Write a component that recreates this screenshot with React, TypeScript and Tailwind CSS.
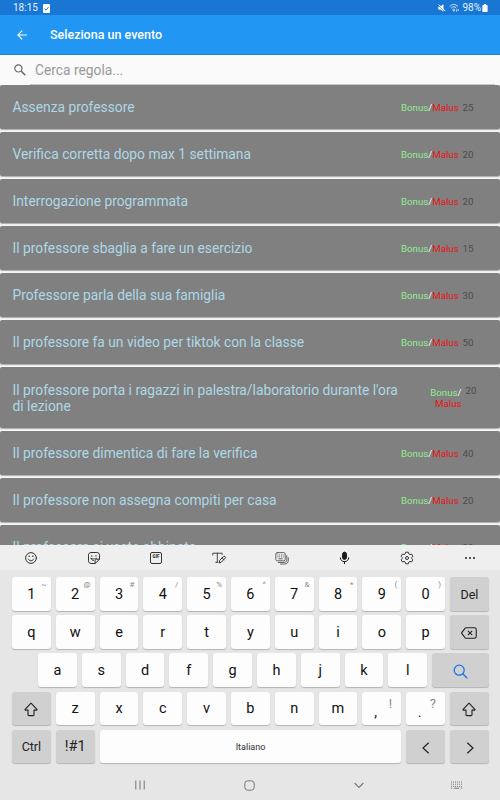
import type { ReactNode } from "react";

type Rule = { name: string; points: number; tall?: boolean };

const rules: Rule[] = [
  { name: "Assenza professore", points: 25 },
  { name: "Verifica corretta dopo max 1 settimana", points: 20 },
  { name: "Interrogazione programmata", points: 20 },
  { name: "Il professore sbaglia a fare un esercizio", points: 15 },
  { name: "Professore parla della sua famiglia", points: 30 },
  { name: "Il professore fa un video per tiktok con la classe", points: 50 },
  {
    name: "Il professore porta i ragazzi in palestra/laboratorio durante l'ora di lezione",
    points: 20,
    tall: true,
  },
  { name: "Il professore dimentica di fare la verifica", points: 40 },
  { name: "Il professore non assegna compiti per casa", points: 20 },
  { name: "Il professore si veste abbinato", points: 20 },
];

const numberKeys = [
  ["1", "~"],
  ["2", "@"],
  ["3", "#"],
  ["4", "/"],
  ["5", "%"],
  ["6", "^"],
  ["7", "&"],
  ["8", "*"],
  ["9", "("],
  ["0", ")"],
];

function RuleRow({ rule }: { rule: Rule }) {
  if (rule.tall) {
    return (
      <li className="flex h-[61px] shrink-0 items-center rounded-[2px] bg-[#808080] pl-[12.5px] shadow-[0_1px_1px_rgba(0,0,0,0.3)]">
        <span className="w-[392px] text-[13.8px] leading-4 text-[#add8e6]">{rule.name}</span>
        <div className="ml-[22px] flex h-8 gap-1 pt-[5px]">
          <span className="w-[35px] text-right text-[9.7px] leading-[11px] text-[#90ee90]">
            Bonus<span className="text-white">/</span>
            <br />
            <span className="text-[#e81414]">Malus</span>
          </span>
          <span className="-mt-[2px] text-[9.8px] leading-[11px] text-[#4c4c4c]">{rule.points}</span>
        </div>
      </li>
    );
  }
  return (
    <li className="flex h-11 shrink-0 items-center rounded-[2px] bg-[#808080] pl-[12.5px] shadow-[0_1px_1px_rgba(0,0,0,0.3)]">
      <span className="flex-1 text-[13.8px] leading-4 text-[#add8e6]">{rule.name}</span>
      <span className="w-[58px] text-[9.7px] leading-[11px] whitespace-nowrap text-[#90ee90]">
        Bonus<span className="text-white">/</span>
        <span className="text-[#e81414]">Malus</span>
      </span>
      <span className="mr-[26.5px] ml-[3.5px] pt-px text-[9.8px] leading-[11px] text-[#4c4c4c]">{rule.points}</span>
    </li>
  );
}

function Key({ children, hint, big, dark, className = "w-[38.8px]" }: {
  children: ReactNode;
  hint?: string;
  big?: boolean;
  dark?: boolean;
  className?: string;
}) {
  return (
    <button
      className={`relative flex h-[33.5px] items-center justify-center rounded-[3px] pt-[2px] text-[14.5px] leading-none shadow-[0_1px_1px_rgba(0,0,0,0.22)] ${
        dark ? "bg-[#d0d0d0] text-[#222]" : "bg-[#fdfdfd] text-[#111]"
      } ${className}`}
    >
      {children}
      {hint && (
        <span className={`absolute text-[#8a8a8a] ${big ? "top-[5px] right-[9px] text-[13px]" : "top-[4px] right-[4px] text-[8px]"}`}>
          {hint}
        </span>
      )}
    </button>
  );
}

function ShiftIcon() {
  return (
    <svg width="14" height="15" viewBox="0 0 14 15" fill="none" stroke="#222" strokeWidth="1.1" strokeLinejoin="round">
      <path d="M7 1.2 12.9 7.3c.3.4.1.8-.4.8H10v4.7c0 .5-.3.8-.8.8H4.8c-.5 0-.8-.3-.8-.8V8.1H1.5c-.5 0-.7-.4-.4-.8Z" />
    </svg>
  );
}

function KeyboardTools() {
  return (
    <div className="grid h-[25px] w-[501px] shrink-0 grid-cols-8 place-items-center bg-[#efefef] text-[#333]">
      <svg width="14" height="14" viewBox="0 0 14 14" fill="none" stroke="currentColor" strokeLinecap="round">
        <circle cx="7" cy="7" r="5.4" />
        <path d="M4.4 8.2c.8 2.2 4.4 2.2 5.200 0" />
        <path d="M5.2 5.2v.2M8.8 5.2v.2" strokeWidth="1.4" />
      </svg>
      <svg width="14" height="14" viewBox="0 0 14 14" fill="none" stroke="currentColor" strokeLinecap="round" strokeLinejoin="round">
        <path d="M4.2 1.5h5.6c1.7 0 2.7 1 2.7 2.7v4L8.2 12.5h-4c-1.7 0-2.7-1-2.7-2.7V4.2c0-1.7 1-2.7 2.7-2.7Z" />
        <path d="M8.1 12.3V10c0-1.2.6-1.8 1.8-1.8h2.4" />
        <path d="M4 7.4c.4 1.400 1.300 2.100 2.500 2.100M4 7.400c1.800.8 3.600.8 5.500 0" strokeWidth=".9" />
        <path d="M4.8 4.8v.2M9 4.8v.2" strokeWidth="1.3" />
      </svg>
      <div className="mr-px flex h-3 w-3 items-center justify-center rounded-[2px] border border-[#333] text-[4.5px] leading-none font-black">
        GIF
      </div>
      <svg width="16" height="14" viewBox="0 0 16 14" fill="none" stroke="currentColor" strokeLinecap="round" strokeLinejoin="round">
        <path d="M1.8 4V2.2h9.4V3.4M6.3 2.2v8.9M4.8 11.3H7" strokeWidth=".9" />
        <path d="m8.4 11.6.3-2.2 3.5-3.7c1.2-1.2 2.9.3 1.8 1.6l-3.4 3.6ZM11.1 7l1.8 1.7" />
      </svg>
      <svg width="15" height="14" viewBox="0 0 15 14" fill="none" stroke="#555" strokeWidth=".9" strokeLinecap="round">
        <rect x="1.8" y="1.6" width="9.4" height="8.2" rx="1.5" />
        <path d="M3.7 4h.2M5.5 4h.2M7.4 4h.2M9.2 4h.2M3.7 5.9h.2M5.5 5.9h.2M7.4 5.9h.2M9.2 5.9h.2M4.8 7.8h3.5" />
        <path d="M4.3 11.4H10c2 0 2.8-.9 2.8-2.7V4.6M6.5 13h4c2.6 0 3.8-1.3 3.8-3.8V6.7" />
      </svg>
      <svg width="11" height="14" viewBox="0 0 11 14" fill="none" stroke="#1c1c1c" strokeLinecap="round">
        <rect x="3.5" y="1.2" width="4" height="7.2" rx="2" fill="#1c1c1c" />
        <path d="M1.3 6.8c0 2.2 1.7 3.8 4.2 3.8s4.2-1.6 4.2-3.8M5.5 10.7v2" />
      </svg>
      <svg width="14" height="14" viewBox="0 0 14 14" fill="none" stroke="currentColor" strokeLinejoin="round">
        <path d="M5.7 1.2h2.6l.5 1.7 1.1.6 1.7-.4 1.3 2.2L11.7 6.5v1l1.2 1.2-1.3 2.2-1.7-.4-1.1.6-.5 1.7H5.7l-.5-1.7-1.1-.6-1.7.4-1.3-2.2 1.2-1.2v-1L1.1 5.3l1.3-2.2 1.7.4 1.1-.6Z" />
        <circle cx="7" cy="7" r="1.5" />
      </svg>
      <svg width="12" height="4" viewBox="0 0 12 4" fill="#222">
        <circle cx="2" cy="2" r="1" />
        <circle cx="6" cy="2" r="1" />
        <circle cx="10" cy="2" r="1" />
      </svg>
    </div>
  );
}

export default function App() {
  return (
    <div className="flex h-[800px] w-[500px] flex-col overflow-hidden bg-[#fafafa] font-['Roboto',sans-serif]">
      {/* status bar */}
      <div className="flex h-[15px] shrink-0 items-center bg-[#1976d2] pt-px pr-3 pl-[13px] leading-none text-[#e4f2ff]">
        <span className="text-[10px]">18:15</span>
        <svg className="ml-[5px]" width="7" height="9" viewBox="0 0 7 9">
          <rect width="7" height="9" rx="1" fill="#fff" />
          <path d="m1.6 4.6 1.4 1.5 2.5-3" fill="none" stroke="#1976d2" strokeWidth="1" />
        </svg>
        <svg className="ml-auto" width="8" height="8" viewBox="0 0 8 8">
          <path d="M.3 2.500h2L5.500.3v7.400L2.300 5.500h-2Z" fill="#fff" />
          <path d="m.3 1.500 6 6" stroke="#1976d2" strokeWidth=".7" />
          <path d="m.8.600 6.600 6.600" stroke="#fff" strokeWidth="1" />
        </svg>
        <svg className="mr-[3px] ml-[3px]" width="10" height="8" viewBox="0 0 10 8" fill="none" stroke="#cfe6fb" strokeWidth="1">
          <path d="M.6 2.600C3-.2 6.600-.2 9 2.600M2.100 4.200c1.700-1.900 3.700-1.900 5.300 0M3.500 5.700c.9-.8 1.700-.8 2.500 0" />
          <path d="M4.200 6.300h1.300l-.7 1ZM7.600 5.500v2M9.200 5v2" />
        </svg>
        <span className="text-[10px]">98%</span>
        <svg className="mb-px ml-px" width="6" height="8" viewBox="0 0 6 8" fill="#fff">
          <path d="M2 0h2v1h1c.4 0 .6.200.6.600v5.800c0 .4-.2.600-.6.600H1c-.4 0-.6-.2-.6-.6V1.600C.4 1.200.6 1 1 1h1Z" />
        </svg>
      </div>

      {/* header */}
      <header className="flex h-10 shrink-0 items-center border-b border-[#1c80d4] bg-[#2196f3] pl-[17px] text-white">
        <svg width="10" height="10" viewBox="0 0 10 10" fill="none" stroke="currentColor" strokeWidth="1.200">
          <path d="M9.900 5H1M5.200.700.900 5l4.300 4.300" />
        </svg>
        <h1 className="ml-[23px] pt-[2px] text-[12.500px] font-medium">Seleziona un evento</h1>
      </header>

      {/* search */}
      <div className="flex h-[30px] shrink-0 pl-[14px]">
        <svg className="mt-[9px]" width="12" height="12" viewBox="0 0 12 12" fill="none" stroke="#666" strokeWidth="1.200">
          <circle cx="4.400" cy="4.400" r="3.600" />
          <path d="m7 7 4.300 4.300" strokeWidth="1.500" />
        </svg>
        <div className="mr-[5px] ml-1 flex flex-1 items-center border-b border-[#c8c8c8] pt-[2px] pl-[5px] text-[13.800px] text-[#999]">
          Cerca regola...
        </div>
      </div>

      {/* rules */}
      <ul className="flex h-[460px] shrink-0 flex-col gap-[3px] overflow-hidden bg-[#f5f5f5]">
        {rules.map((rule) => (
          <RuleRow key={rule.name} rule={rule} />
        ))}
      </ul>

      <KeyboardTools />

      {/* keyboard */}
      <div className="flex flex-1 flex-col bg-[#e6e6e6]">
        <div className="flex flex-col gap-[4.700px] pt-[7px] pr-[11px] pl-3">
          <div className="flex gap-[5px]">
            {numberKeys.map(([key, hint]) => (
              <Key key={key} hint={hint}>{key}</Key>
            ))}
            <Key dark>
              <span className="text-[12.500px]">Del</span>
            </Key>
          </div>
          <div className="flex gap-[5px]">
            {"qwertyuiop".split("").map((key) => (
              <Key key={key}>{key}</Key>
            ))}
            <Key dark>
              <svg width="16" height="12" viewBox="0 0 16 12" fill="none" stroke="#222" strokeWidth="1.100" strokeLinejoin="round">
                <path d="M5.300.700h8.200c1 0 1.700.700 1.700 1.700v7.200c0 1-.7 1.700-1.700 1.700H5.300c-.5 0-.8-.2-1.100-.5L.900 6.600a.9.900 0 0 1 0-1.200L4.200 1.200c.300-.3.600-.5 1.100-.5Z" />
                <path d="m6.900 3.800 4.300 4.400M11.200 3.800 6.900 8.200" />
              </svg>
            </Key>
          </div>
          <div className="flex gap-[5px] pl-[26px]">
            {"asdfghjkl".split("").map((key) => (
              <Key key={key}>{key}</Key>
            ))}
            <Key dark className="flex-1">
              <svg width="15" height="15" viewBox="0 0 15 15" fill="none" stroke="#1a73e8" strokeWidth="1.300">
                <circle cx="6.200" cy="6.200" r="5" />
                <path d="m9.800 9.800 4.400 4.400" />
              </svg>
            </Key>
          </div>
          <div className="flex gap-[5px]">
            <Key dark><ShiftIcon /></Key>
            {"zxcvbnm".split("").map((key) => (
              <Key key={key}>{key}</Key>
            ))}
            <Key hint="!" big><span className="pt-2 pr-[12px]">,</span></Key>
            <Key hint="?" big><span className="pt-2 pr-[12px]">.</span></Key>
            <Key dark><ShiftIcon /></Key>
          </div>
          <div className="flex gap-[5px]">
            <Key dark><span className="text-[12.500px]">Ctrl</span></Key>
            <Key dark>!#1</Key>
            <Key className="flex-1"><span className="text-[9px] text-[#333]">Italiano</span></Key>
            <Key dark>
              <svg width="8" height="12" viewBox="0 0 8 12" fill="none" stroke="#222" strokeWidth="1.200">
                <path d="M6.700.700 1 6l5.700 5.300" />
              </svg>
            </Key>
            <Key dark>
              <svg width="8" height="12" viewBox="0 0 8 12" fill="none" stroke="#222" strokeWidth="1.200">
                <path d="M1.300.700 7 6l-5.700 5.300" />
              </svg>
            </Key>
          </div>
        </div>

        {/* system navigation */}
        <div className="flex h-[30px] items-center pt-[14px] pl-[135px] text-[#777]">
          <svg width="10" height="10" viewBox="0 0 10 10" stroke="currentColor" strokeWidth="1">
            <path d="M.8.500v9M5 .500v9M9.200.500v9" />
          </svg>
          <svg className="ml-[99px]" width="11" height="11" viewBox="0 0 11 11" fill="none" stroke="currentColor">
            <rect x=".800" y=".800" width="9.400" height="9.400" rx="3" />
          </svg>
          <svg className="ml-[99px]" width="10" height="7" viewBox="0 0 10 7" fill="none" stroke="currentColor" strokeWidth="1.100">
            <path d="m.6 1 4.400 4.400L9.400 1" />
          </svg>
          <svg className="ml-[86px]" width="13" height="8" viewBox="0 0 13 8" stroke="currentColor" strokeWidth="1">
            <path d="M1 1h11M1 3.200h11M1 5.400h11" strokeDasharray="1 1" />
            <path d="M1 7.200h1.200M3.800 7.200h5.400M10.800 7.200H12" />
          </svg>
        </div>
      </div>
    </div>
  );
}
